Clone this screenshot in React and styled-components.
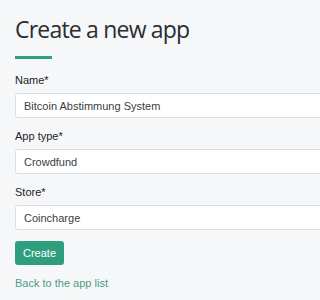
import React from "react";
import styled, { createGlobalStyle } from "styled-components";

const GlobalStyle = createGlobalStyle`
  html, body {
    margin: 0;
    padding: 0;
    background: #f5f7f9;
    overflow: hidden;
  }
  body {
    font-family: "Liberation Sans", Arial, sans-serif;
    color: #222;
  }
`;

const Page = styled.div`
  width: 100vw;
  height: 100vh;
  overflow: hidden;
  padding: 14px 0 0 15px;
  box-sizing: border-box;
`;

const Form = styled.form`
  width: 340px;
  display: flex;
  flex-direction: column;
`;

const Title = styled.h1`
  margin: 0;
  font-family: "Open Sans", sans-serif;
  font-weight: 400;
  font-size: 23px;
  letter-spacing: -0.8px;
  line-height: 30px;
  color: #2a2d31;
  white-space: nowrap;
`;

const Underline = styled.hr`
  width: 37px;
  height: 3px;
  margin: 12px 0 15px;
  border: none;
  background: #329f80;
`;

const Field = styled.div`
  display: flex;
  flex-direction: column;
  margin-bottom: 12px;

  &:last-of-type {
    margin-bottom: 11px;
  }
`;

const Label = styled.label`
  font-size: 11px;
  line-height: 13px;
  margin-bottom: 6px;
  color: #222;
`;

const Input = styled.div`
  box-sizing: border-box;
  height: 25px;
  padding: 0 8px;
  display: flex;
  align-items: center;
  background: #fff;
  border: 1px solid #dcdfe2;
  border-radius: 3px;
  font-size: 11px;
  color: #3a3d40;
`;

const Button = styled.button`
  align-self: flex-start;
  height: 24px;
  padding: 0 8px;
  border: none;
  border-radius: 3px;
  background: #2f9e7e;
  color: #fff;
  font-family: "Liberation Sans", Arial, sans-serif;
  font-size: 11px;
`;

const BackLink = styled.a`
  display: block;
  margin-top: 12px;
  font-size: 11px;
  line-height: 13px;
  color: #4a9d80;
  text-decoration: none;
`;

export default function App() {
  return (
    <>
      <GlobalStyle />
      <Page>
        <Form>
          <Title>Create a new app</Title>
          <Underline />
          <Field>
            <Label>Name*</Label>
            <Input>Bitcoin Abstimmung System</Input>
          </Field>
          <Field>
            <Label>App type*</Label>
            <Input>Crowdfund</Input>
          </Field>
          <Field>
            <Label>Store*</Label>
            <Input>Coincharge</Input>
          </Field>
          <Button type="button">Create</Button>
          <BackLink href="#">Back to the app list</BackLink>
        </Form>
      </Page>
    </>
  );
}
